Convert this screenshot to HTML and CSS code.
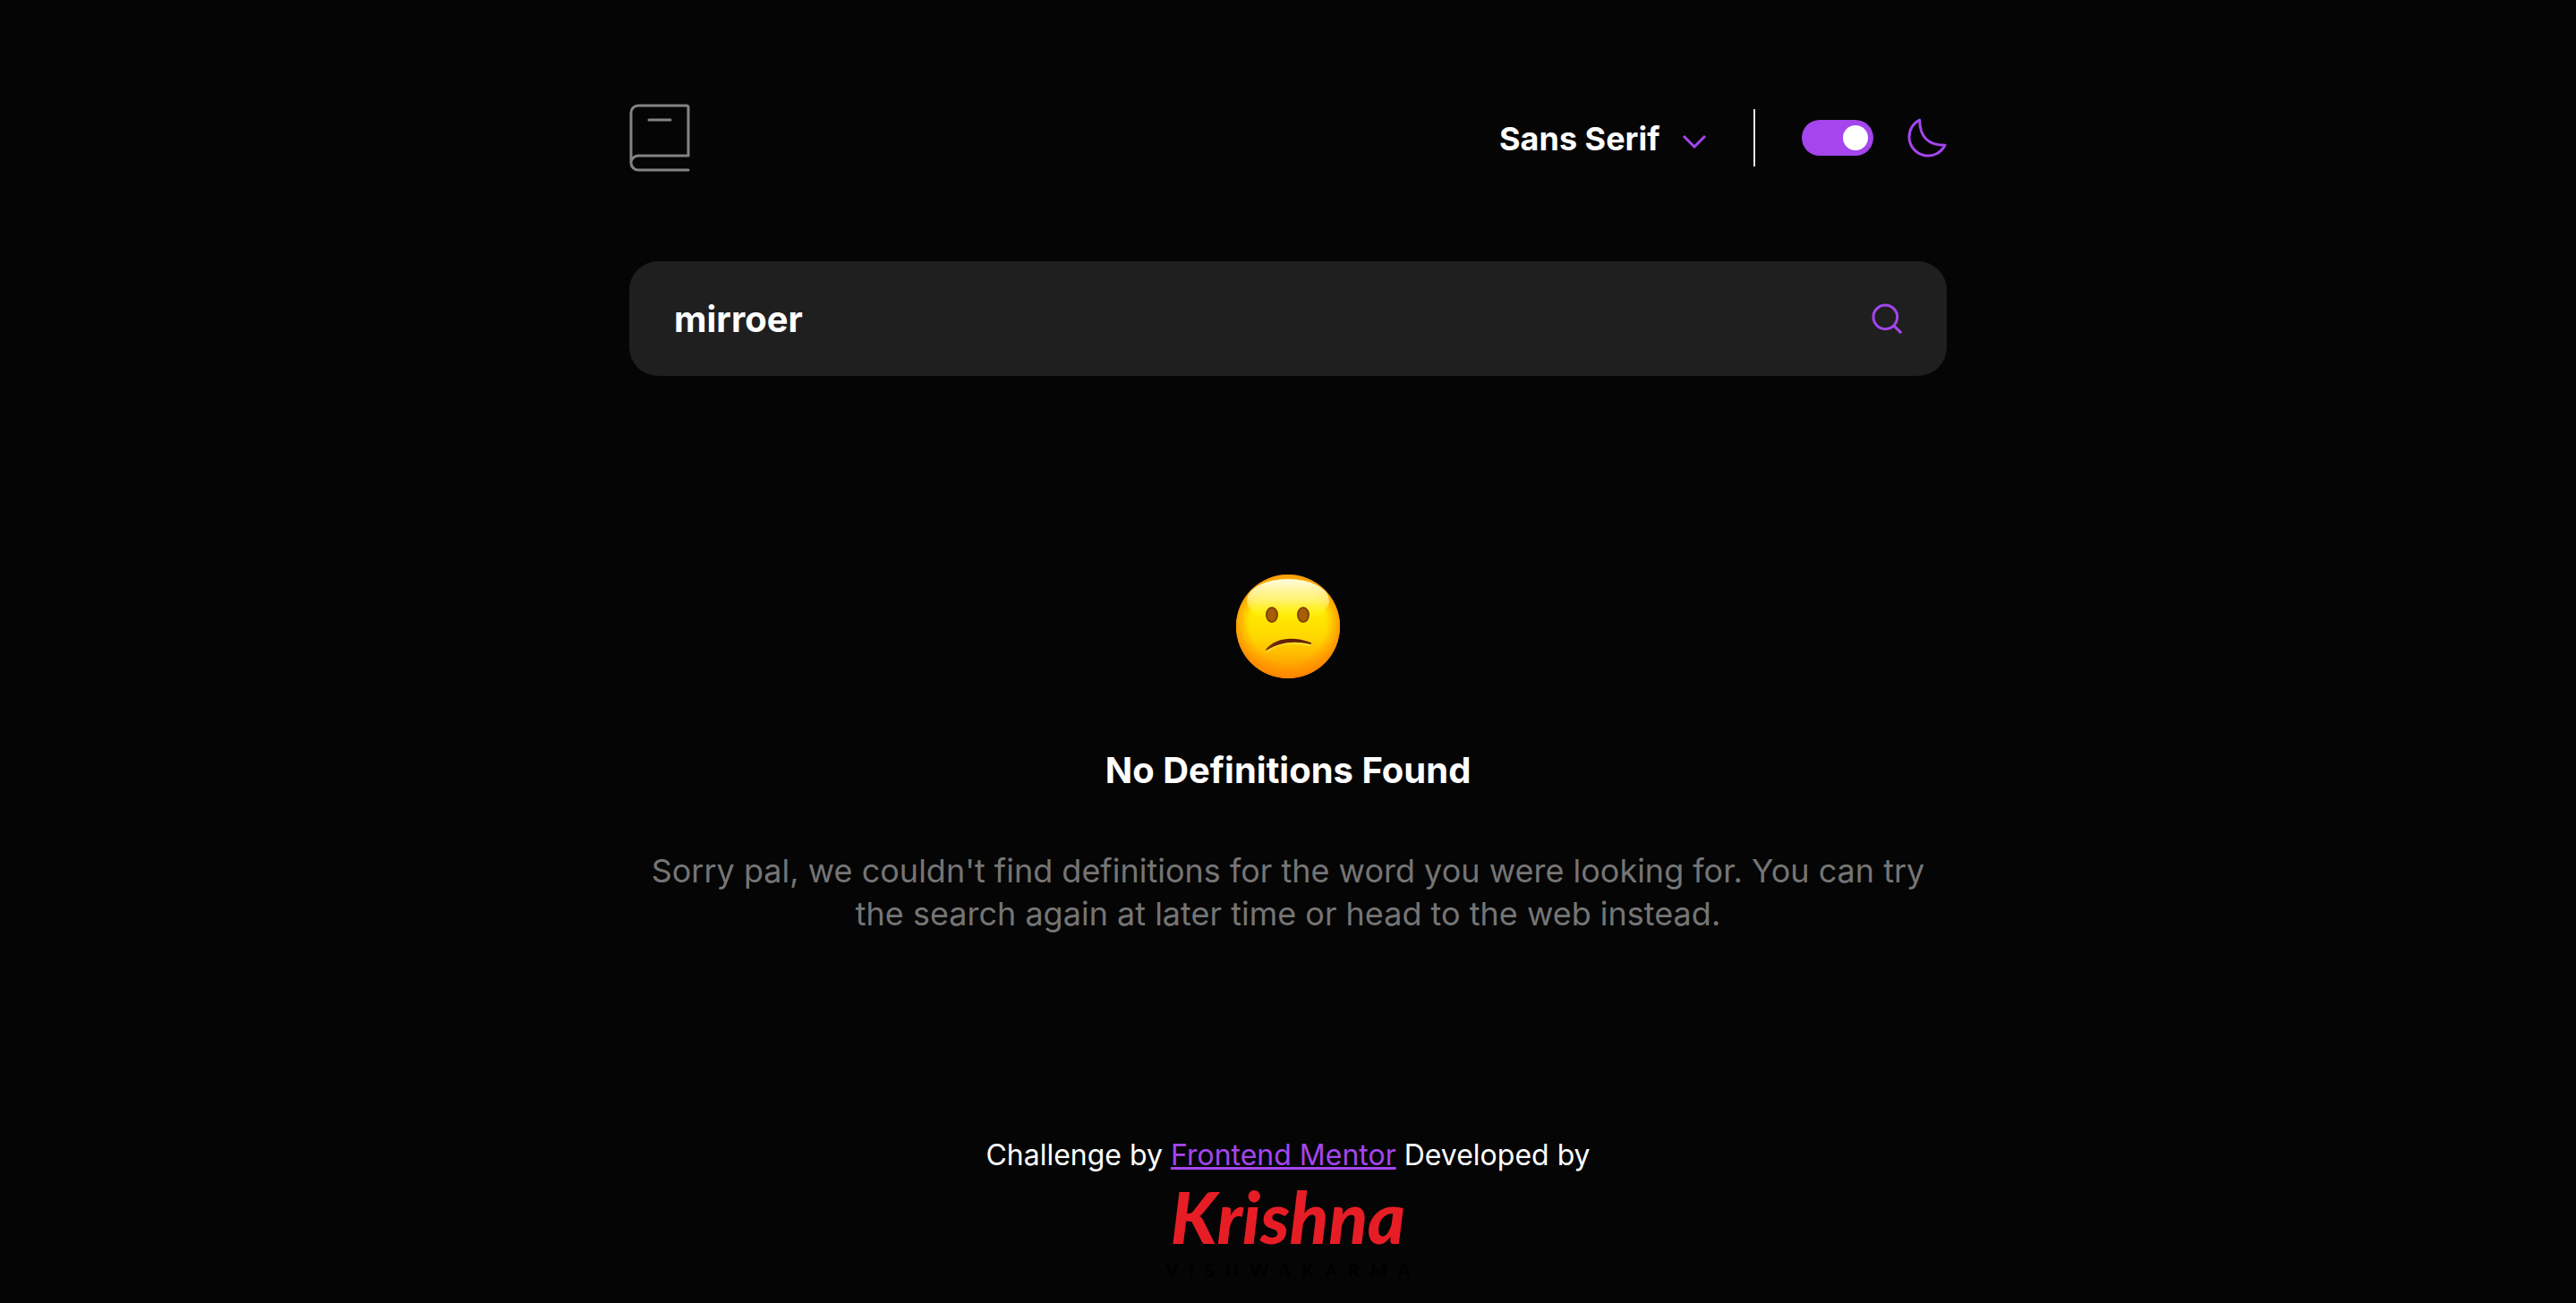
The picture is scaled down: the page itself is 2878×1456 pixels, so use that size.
FILE: index.html
```html
<!DOCTYPE html>
<html lang="en">
<head>
  <meta charset="utf-8">
  <meta name="viewport" content="width=device-width, initial-scale=1">
  <title>Dictionary</title>
  <link rel="stylesheet" href="styles.css">
</head>
<body>
  <div class="page">
    <header class="header">
      <a class="brand" href="#" aria-label="Dictionary home">
        <svg class="icon" width="68" height="76" viewBox="0 0 68 76" fill="none" stroke="#838383" stroke-width="3" stroke-linecap="round" stroke-linejoin="round">
          <path d="M66 74H10a8 8 0 0 1 0-16h56V4a2 2 0 0 0-2-2H10a8 8 0 0 0-8 8v56M22 18h24"/>
        </svg>
      </a>
      <div class="font-picker">
        <select class="font-select" aria-label="Font">
          <option selected>Sans Serif</option>
          <option>Serif</option>
          <option>Mono</option>
        </select>
        <svg class="chevron" width="28" height="16" viewBox="0 0 14 8" fill="none" stroke="#a445ed" stroke-width="1.5"><path d="m1 1 6 6 6-6"/></svg>
      </div>
      <span class="divider"></span>
      <label class="theme">
        <input class="switch" type="checkbox" aria-label="Dark theme" checked>
        <svg class="icon" width="44" height="44" viewBox="0 0 22 22" fill="none" stroke="#a445ed" stroke-width="1.5" stroke-linecap="round" stroke-linejoin="round"><path d="M1 10.449a10.544 10.544 0 0 0 19.993 4.686C11.544 15.135 6.858 10.448 6.858 1A10.545 10.545 0 0 0 1 10.449Z"/></svg>
      </label>
    </header>

    <main>
      <form class="search">
        <input class="search-input" type="text" value="mirroer" aria-label="Search for a word">
        <button class="search-button" type="button" aria-label="Search">
          <svg class="icon" width="36" height="36" viewBox="0 0 18 18" fill="none" stroke="#a445ed" stroke-width="1.5"><path d="m12.663 12.663 3.887 3.887M1 7.664a6.665 6.665 0 1 0 13.33 0 6.665 6.665 0 0 0-13.33 0Z"/></svg>
        </button>
      </form>

      <section class="empty">
        <svg class="icon" width="116" height="116" viewBox="0 0 116 116" role="img" aria-label="Confused face">
          <defs>
            <linearGradient id="face" x1="0" y1="0" x2="0" y2="1">
              <stop offset="0" stop-color="#ffc413"/>
              <stop offset=".35" stop-color="#ffed00"/>
              <stop offset=".6" stop-color="#ffd800"/>
              <stop offset=".85" stop-color="#ffaa00"/>
              <stop offset="1" stop-color="#ff9200"/>
            </linearGradient>
            <radialGradient id="rim" cx=".5" cy=".48" r=".52">
              <stop offset=".7" stop-color="#ff8a00" stop-opacity="0"/>
              <stop offset="1" stop-color="#ff8200" stop-opacity=".85"/>
            </radialGradient>
            <linearGradient id="shine" x1="0" y1="0" x2="0" y2="1">
              <stop offset="0" stop-color="#fffde0"/>
              <stop offset=".5" stop-color="#fff98f" stop-opacity=".75"/>
              <stop offset="1" stop-color="#fff200" stop-opacity="0"/>
            </linearGradient>
            <linearGradient id="mouth" x1="0" y1="0" x2="0" y2="1">
              <stop offset="0" stop-color="#5c1c04"/>
              <stop offset="1" stop-color="#8a3a06"/>
            </linearGradient>
          </defs>
          <circle cx="58" cy="58" r="58" fill="url(#face)"/>
          <circle cx="58" cy="58" r="58" fill="url(#rim)"/>
          <ellipse cx="58" cy="29" rx="46" ry="24" fill="url(#shine)"/>
          <g fill="#a65f05" stroke="#834406" stroke-width="2">
            <ellipse cx="40" cy="45" rx="6" ry="8"/>
            <ellipse cx="75" cy="45" rx="6" ry="8"/>
          </g>
          <path d="M34 86C47 76 64 74 83 79" fill="none" stroke="#ffe83a" stroke-width="2"/>
          <path d="M33 84C44 70 65 69 83.500 76Q85 77.500 83 78C65 74 50 75 34 85Z" fill="url(#mouth)"/>
        </svg>
        <h1 class="title">No Definitions Found</h1>
        <p class="message">Sorry pal, we couldn't find definitions for the word you were looking for. You can try the search again at later time or head to the web instead.</p>
      </section>
    </main>

    <footer class="footer">
      <p class="credit">Challenge by <a class="link" href="#">Frontend Mentor</a> Developed by</p>
      <a class="signature" href="#">
        <span class="first-name">Krishna</span>
        <span class="last-name">VISHWAKARMA</span>
      </a>
    </footer>
  </div>
</body>
</html>
```
FILE: styles.css
```css
* {
  box-sizing: border-box;
}

body {
  margin: 0;
  background: #050505;
  color: #fff;
  font-family: Inter, "Liberation Sans", sans-serif;
}

.page {
  max-width: 1472px;
  margin: 0 auto;
  padding-top: 116px;
}

.icon {
  display: block;
}

.header {
  display: flex;
  align-items: center;
}

.brand {
  margin-right: auto;
}

.font-picker {
  display: grid;
  align-items: center;
}

.font-select,
.chevron {
  grid-area: 1 / 1;
}

.font-select {
  appearance: none;
  margin: 0;
  padding: 2px 52px 0 0;
  border: 0;
  background: none;
  color: inherit;
  font: 700 36px/48px Inter, "Liberation Sans", sans-serif;
}

.font-select option {
  background: #1f1f1f;
}

.chevron {
  justify-self: end;
  margin-top: 8px;
  pointer-events: none;
}

.divider {
  width: 2px;
  height: 64px;
  margin: 0 52px;
  background: #e9e9e9;
}

.theme {
  display: flex;
  align-items: center;
  gap: 38px;
}

.switch {
  appearance: none;
  display: flex;
  align-items: center;
  justify-content: flex-end;
  width: 80px;
  height: 40px;
  margin: 0;
  padding: 6px;
  border-radius: 20px;
  background: #a445ed;
}

.switch::before {
  content: "";
  width: 28px;
  height: 28px;
  border-radius: 50%;
  background: #fff;
}

.search {
  display: flex;
  align-items: center;
  height: 128px;
  margin-top: 100px;
  padding: 2px 48px 0 50px;
  border-radius: 32px;
  background: #1f1f1f;
}

.search-input {
  flex: 1;
  min-width: 0;
  padding: 0;
  border: 0;
  outline: 0;
  background: none;
  color: inherit;
  font: 700 40px/48px Inter, "Liberation Sans", sans-serif;
}

.search-button {
  padding: 0;
  border: 0;
  background: none;
}

.empty {
  display: flex;
  flex-direction: column;
  align-items: center;
  margin-top: 222px;
  text-align: center;
}

.title {
  margin: 79px 0 0;
  font-size: 40px;
  line-height: 48px;
}

.message {
  margin: 64px 0 0;
  color: #757575;
  font-size: 36px;
  line-height: 48px;
}

.footer {
  display: flex;
  flex-direction: column;
  align-items: center;
  margin-top: 226px;
}

.credit {
  margin: 0;
  font-size: 32px;
  line-height: 40px;
}

.link {
  color: #a445ed;
}

.signature {
  display: flex;
  flex-direction: column;
  align-items: center;
  padding-bottom: 16px;
  text-decoration: none;
}

.first-name {
  color: #e71d25;
  font: italic 900 80px/96px Lato, "Open Sans", sans-serif;
}

.last-name {
  padding-left: 12px;
  color: #000;
  font: 700 20px/24px Lato, "Open Sans", sans-serif;
  letter-spacing: 12px;
}
```
